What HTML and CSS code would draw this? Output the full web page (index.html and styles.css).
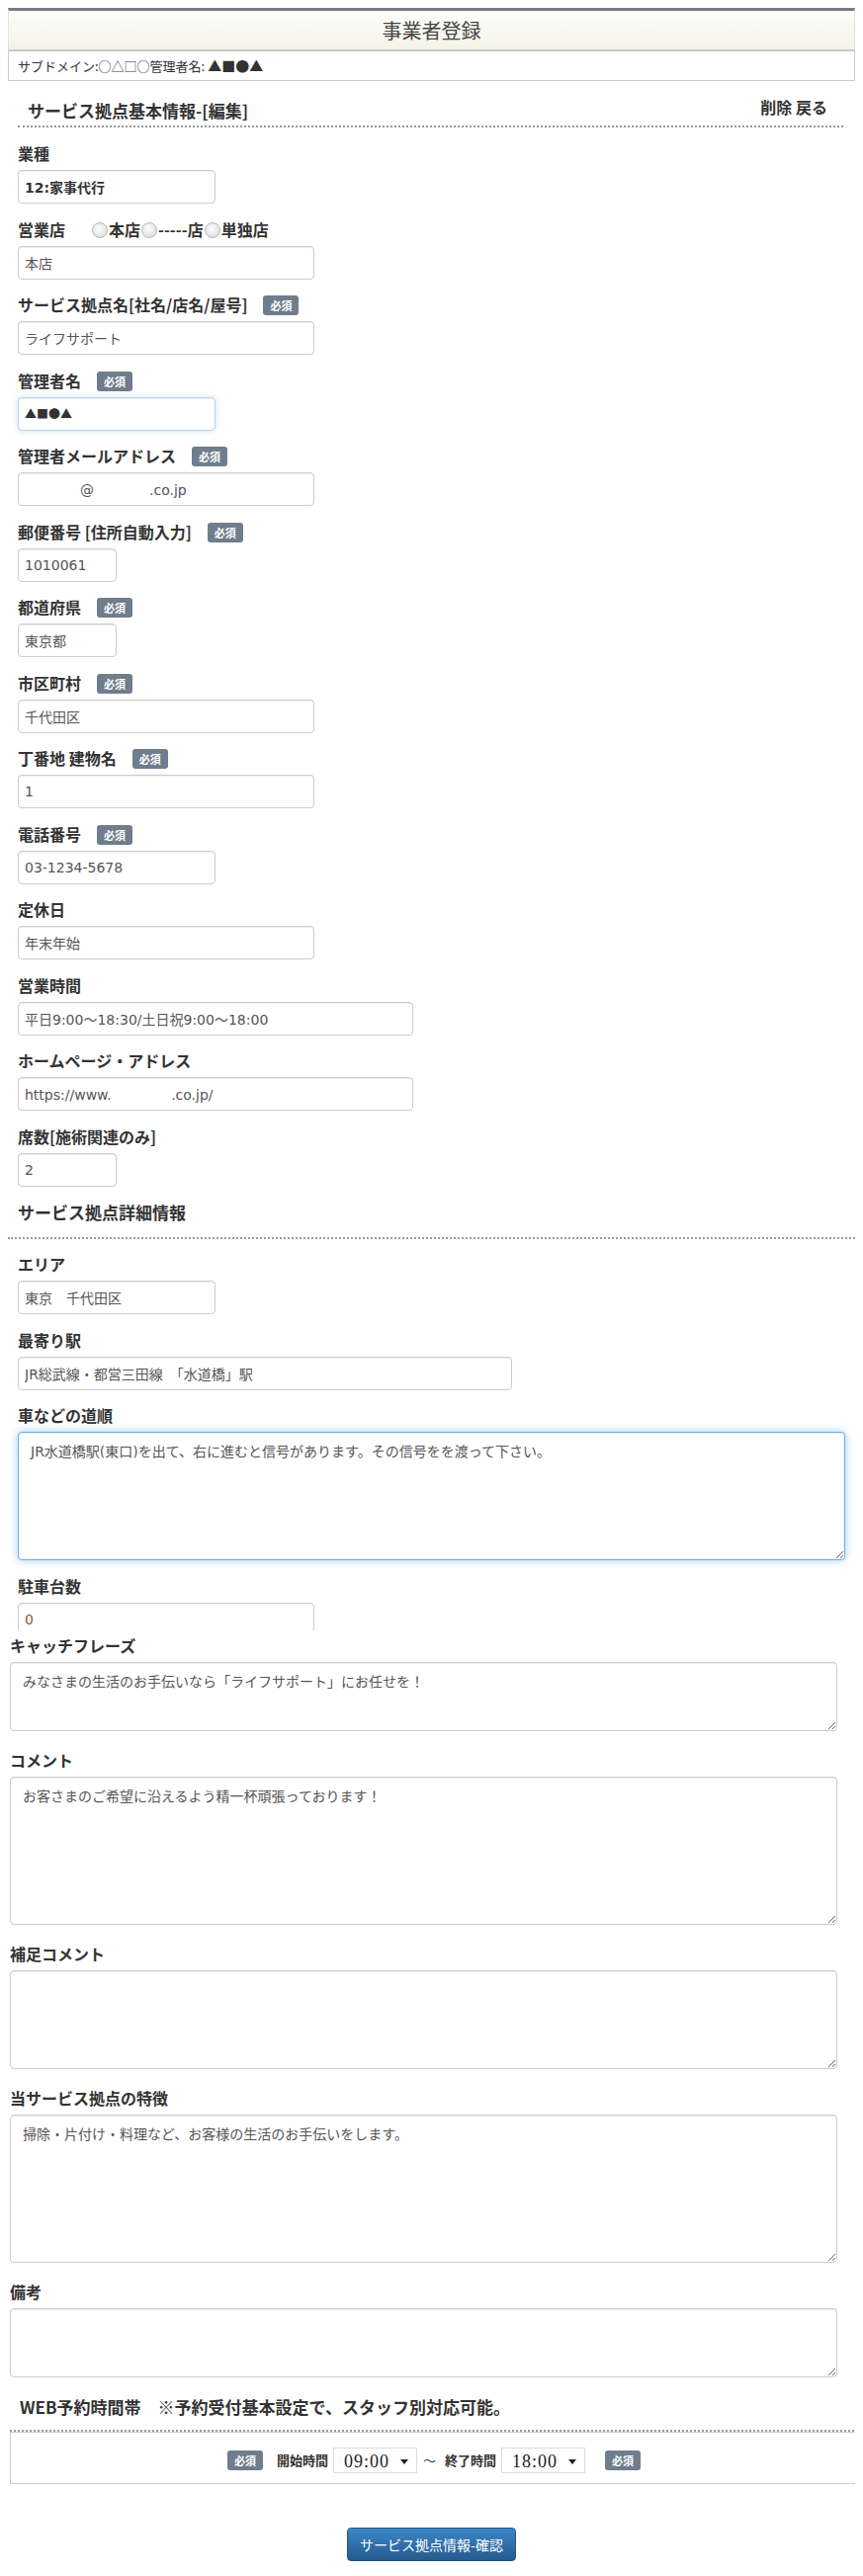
FILE: index.html
```html
<!DOCTYPE html>
<html lang="ja">
<head>
  <meta charset="UTF-8">
  <title>事業者登録</title>
  <link rel="stylesheet" href="styles.css">
</head>
<body>

  <div class="header">
    <h1>事業者登録</h1>
  </div>
  <div class="subdomain">サブドメイン:○△□○管理者名: <span class="marks">▲■●▲</span></div>

  <div class="section-head">
    <h2>サービス拠点基本情報-[編集]</h2>
    <div class="links">削除 戻る</div>
  </div>

  <div class="form">
    <div class="field">
      <label class="lbl">業種</label>
      <input class="input w200 strong" type="text" value="12:家事代行" readonly>
    </div>
    <div class="field">
      <div class="lbl">営業店<span class="radios"><input type="radio" name="shop" class="radio">本店<input type="radio" name="shop" class="radio">-----店<input type="radio" name="shop" class="radio">単独店</span></div>
      <input class="input w300" type="text" value="本店">
    </div>
    <div class="field">
      <label class="lbl">サービス拠点名[社名/店名/屋号]<span class="badge">必須</span></label>
      <input class="input w300" type="text" value="ライフサポート">
    </div>
    <div class="field">
      <label class="lbl">管理者名<span class="badge">必須</span></label>
      <input class="input w200 soft-focus marks-input" type="text" value="▲■●▲">
    </div>
    <div class="field">
      <label class="lbl">管理者メールアドレス<span class="badge">必須</span></label>
      <input class="input w300" type="text" value="　　　　@　　　　.co.jp">
    </div>
    <div class="field">
      <label class="lbl">郵便番号 [住所自動入力]<span class="badge">必須</span></label>
      <input class="input w100" type="text" value="1010061">
    </div>
    <div class="field">
      <label class="lbl">都道府県<span class="badge">必須</span></label>
      <input class="input w100" type="text" value="東京都">
    </div>
    <div class="field">
      <label class="lbl">市区町村<span class="badge">必須</span></label>
      <input class="input w300" type="text" value="千代田区">
    </div>
    <div class="field">
      <label class="lbl">丁番地 建物名<span class="badge">必須</span></label>
      <input class="input w300" type="text" value="1">
    </div>
    <div class="field">
      <label class="lbl">電話番号<span class="badge">必須</span></label>
      <input class="input w200" type="text" value="03-1234-5678">
    </div>
    <div class="field">
      <label class="lbl">定休日</label>
      <input class="input w300" type="text" value="年末年始">
    </div>
    <div class="field">
      <label class="lbl">営業時間</label>
      <input class="input w400" type="text" value="平日9:00〜18:30/土日祝9:00〜18:00">
    </div>
    <div class="field">
      <label class="lbl">ホームページ・アドレス</label>
      <input class="input w400" type="text" value="https://www.　　　　 .co.jp/">
    </div>
    <div class="field">
      <label class="lbl">席数[施術関連のみ]</label>
      <input class="input w100" type="text" value="2">
    </div>

    <h2 class="detail-head">サービス拠点詳細情報</h2>

    <div class="field">
      <label class="lbl">エリア</label>
      <input class="input w200" type="text" value="東京　千代田区">
    </div>
    <div class="field">
      <label class="lbl">最寄り駅</label>
      <input class="input w500" type="text" value="JR総武線・都営三田線　「水道橋」駅">
    </div>
    <div class="field">
      <label class="lbl">車などの道順</label>
      <textarea class="text route focus">JR水道橋駅(東口)を出て、右に進むと信号があります。その信号をを渡って下さい。</textarea>
    </div>
    <div class="field clip">
      <label class="lbl">駐車台数</label>
      <input class="input w300 count" type="text" value="0">
    </div>
  </div>

  <div class="wide">
    <div class="field">
      <label class="lbl">キャッチフレーズ</label>
      <textarea class="text h70">みなさまの生活のお手伝いなら「ライフサポート」にお任せを！</textarea>
    </div>
    <div class="field">
      <label class="lbl">コメント</label>
      <textarea class="text h150">お客さまのご希望に沿えるよう精一杯頑張っております！</textarea>
    </div>
    <div class="field">
      <label class="lbl">補足コメント</label>
      <textarea class="text h100"></textarea>
    </div>
    <div class="field">
      <label class="lbl">当サービス拠点の特徴</label>
      <textarea class="text h150">掃除・片付け・料理など、お客様の生活のお手伝いをします。</textarea>
    </div>
    <div class="field">
      <label class="lbl">備考</label>
      <textarea class="text h70"></textarea>
    </div>
  </div>

  <h2 class="web-head">WEB予約時間帯　※予約受付基本設定で、スタッフ別対応可能。</h2>
  <div class="time-box">
    <span class="badge">必須</span>
    <span class="time-lbl">開始時間</span>
    <span class="time-select"><select><option>09:00</option></select></span>
    <span class="tilde">〜</span>
    <span class="time-lbl">終了時間</span>
    <span class="time-select"><select><option>18:00</option></select></span>
    <span class="badge">必須</span>
  </div>

  <div class="actions">
    <button class="submit">サービス拠点情報-確認</button>
  </div>

</body>
</html>
```

FILE: styles.css
```css
body {
  margin: 8px;
  font-family: "Noto Sans CJK JP", sans-serif;
  color: #333;
  background: #fff;
}

.header {
  height: 39px;
  border-top: 3px solid #747c86;
  border-left: 1px solid #e2e2e2;
  border-right: 1px solid #e2e2e2;
  border-bottom: 2px solid #c9c9c9;
  background: linear-gradient(#fdfdfa, #f3f3e9);
}

.header h1 {
  margin: 0;
  font-size: 20px;
  font-weight: normal;
  line-height: 39px;
  text-align: center;
  color: #444;
}

.subdomain {
  height: 29px;
  line-height: 29px;
  padding-left: 9px;
  border: 1px solid #ccc;
  border-top: none;
  font-size: 13px;
}

.marks {
  font-size: 14px;
}

.section-head {
  display: flex;
  justify-content: space-between;
  align-items: flex-start;
  margin: 18px 12px 0 10px;
  padding: 0 16px 3px 10px;
  border-bottom: 2px dotted #999;
}

.section-head h2 {
  margin: 0;
  font-size: 17px;
  line-height: 24px;
}

.links {
  font-size: 16px;
  font-weight: bold;
  line-height: 16px;
}

.form {
  padding: 15px 0 0 10px;
}

.field {
  margin-bottom: 14.5px;
}

.lbl {
  display: block;
  height: 22px;
  margin-bottom: 6px;
  font-size: 16px;
  font-weight: bold;
  line-height: 22px;
  white-space: nowrap;
}

.badge {
  display: inline-block;
  height: 20px;
  margin-left: 16px;
  padding: 0 7px;
  border-radius: 3px;
  background: #6f7d8c;
  color: #fff;
  font-size: 11px;
  font-weight: bold;
  line-height: 20px;
  vertical-align: 1px;
}

.radios {
  margin-left: 26px;
}

.radio {
  appearance: none;
  width: 16px;
  height: 16px;
  margin: 0 1px;
  border: 1px solid #b8b8b8;
  border-radius: 50%;
  background: radial-gradient(circle at 45% 40%, #fff, #d6d6d6);
  vertical-align: -2px;
}

.input,
.text {
  display: block;
  box-sizing: border-box;
  border: 1px solid #ccc;
  border-radius: 4px;
  box-shadow: inset 0 1px 1px rgba(0, 0, 0, .075);
  background: #fff;
  color: #555;
  font: 14px "DejaVu Sans", "Noto Sans CJK JP", sans-serif;
}

.input {
  height: 34px;
  padding: 6px;
}

.w100 { width: 100px; }
.w200 { width: 200px; }
.w300 { width: 300px; }
.w400 { width: 400px; }
.w500 { width: 500px; }

.strong {
  font-weight: bold;
  color: #333;
}

.marks-input {
  font-family: "Noto Sans CJK JP", sans-serif;
  font-size: 12px;
  color: #333;
}

.focus {
  border-color: #66afe9;
  outline: none;
  box-shadow: inset 0 1px 1px rgba(0, 0, 0, .075), 0 0 8px rgba(102, 175, 233, .6);
}

.soft-focus {
  border-color: #b9d3e9;
  box-shadow: inset 0 1px 1px rgba(0, 0, 0, .075), 0 0 6px rgba(102, 175, 233, .35);
}

.detail-head {
  margin: 6px 0 14px -10px;
  padding: 0 0 13px 10px;
  border-bottom: 2px dotted #999;
  font-size: 17px;
  line-height: 24px;
}

.text {
  padding: 8px 12px;
  resize: vertical;
}

.route {
  width: 837px;
  height: 130px;
}

.clip {
  height: 56px;
  margin-bottom: 4px;
  overflow: hidden;
}

.count {
  color: #8d5a33;
}

.wide {
  padding-left: 2px;
}

.wide .field {
  margin-bottom: 18px;
}

.wide .text {
  width: 837px;
}

.h70 { height: 70px; }
.h100 { height: 100px; }
.h150 { height: 150px; }

.web-head {
  margin: 3px -3px 0 2px;
  padding: 0 0 11px 10px;
  border-bottom: 2px dotted #999;
  font-size: 17px;
  line-height: 24px;
}

.time-box {
  display: flex;
  justify-content: center;
  align-items: center;
  margin: 0 -3px 0 2px;
  padding: 15px 0 10px;
  border: 1px solid #ccc;
}

.time-box .badge {
  margin: 0 14px 0 0;
}

.time-box .badge:last-child {
  margin: 0 0 0 14px;
}

.time-lbl {
  margin-right: 5px;
  font-size: 13px;
  font-weight: bold;
}

.time-select {
  position: relative;
  display: inline-block;
  width: 85px;
  height: 26px;
  box-sizing: border-box;
  border: 1px solid #ddd;
  margin-right: 6px;
}

.time-select::after {
  content: "";
  position: absolute;
  right: 8px;
  top: 11px;
  border-left: 4px solid transparent;
  border-right: 4px solid transparent;
  border-top: 5px solid #222;
}

.time-select select {
  appearance: none;
  width: 100%;
  height: 24px;
  padding: 0 0 0 10px;
  border: none;
  background: transparent;
  color: #222;
  font: 18px "Liberation Serif", serif;
  letter-spacing: 1px;
}

.tilde {
  margin-right: 9px;
  font-size: 13px;
}

.actions {
  margin-top: 44px;
  text-align: center;
}

.submit {
  height: 34px;
  padding: 0 12px;
  border: 1px solid #245580;
  border-radius: 4px;
  background: linear-gradient(#3b86c6, #265b8d);
  color: #fff;
  font: 14px "Noto Sans CJK JP", sans-serif;
}
```
